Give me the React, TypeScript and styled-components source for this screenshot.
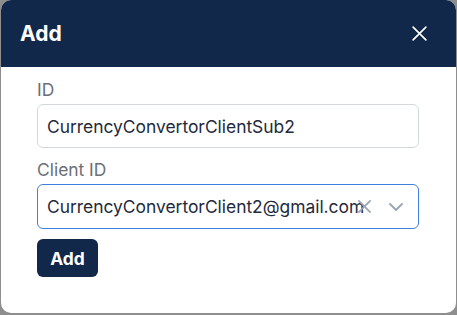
import React from "react";
import styled, { createGlobalStyle } from "styled-components";

const Global = createGlobalStyle`
  html, body { margin: 0; padding: 0; background: #8e8e8e; }
  body { font-family: Inter, "Liberation Sans", sans-serif; }
  * { box-sizing: border-box; }
`;

const Dialog = styled.div`
  margin: 0 1px;
  width: 455px;
  height: 313px;
  background: #ffffff;
  border-radius: 10px;
  overflow: hidden;
  display: flex;
  flex-direction: column;
`;

const Header = styled.div`
  height: 67px;
  background: #12284a;
  display: flex;
  align-items: center;
  justify-content: space-between;
  padding: 0 28px 0 19px;
`;

const Title = styled.h2`
  margin: 0;
  color: #ffffff;
  font-size: 21px;
  font-weight: 700;
  line-height: 1;
`;

const CloseButton = styled.button`
  border: 0;
  background: transparent;
  padding: 0;
  width: 17px;
  height: 17px;
  display: flex;
  align-items: center;
  justify-content: center;
  color: #ffffff;
  cursor: pointer;
`;

const Body = styled.div`
  padding: 11px 37px 0 36px;
  display: flex;
  flex-direction: column;
`;

const Field = styled.div`
  display: flex;
  flex-direction: column;
  gap: 2px;
  margin-bottom: 10px;
`;

const Label = styled.label`
  font-size: 17.4px;
  line-height: 24px;
  color: #6b6f76;
`;

const TextInput = styled.div<{ $focused?: boolean }>`
  position: relative;
  height: ${(p) => (p.$focused ? 45 : 44)}px;
  border: 1px solid ${(p) => (p.$focused ? "#3f7fe0" : "#d3d8df")};
  border-radius: 6px;
  display: flex;
  align-items: center;
  padding: 0 10px 0 9px;
  font-size: 17.4px;
  color: #1f2a3c;
  white-space: nowrap;
`;

const Value = styled.span<{ $clipRight?: number }>`
  display: block;
  overflow: hidden;
  width: ${(p) => (p.$clipRight ? `calc(100% - ${p.$clipRight}px)` : "100%")};
`;

const Indicators = styled.div`
  position: absolute;
  right: 14px;
  top: 0;
  bottom: 0;
  display: flex;
  align-items: center;
  gap: 16px;
  color: #9aa4b3;
`;

const PrimaryButton = styled.button`
  align-self: flex-start;
  border: 0;
  background: #12284a;
  color: #ffffff;
  font-family: inherit;
  font-size: 17.4px;
  font-weight: 700;
  height: 38px;
  width: 61px;
  border-radius: 6px;
  padding: 0;
`;

const XIcon = ({ size, stroke = 2 }: { size: number; stroke?: number }) => (
  <svg width={size} height={size} viewBox="0 0 16 16" fill="none" stroke="currentColor" strokeWidth={stroke} strokeLinecap="round">
    <path d="M2 2 L14 14 M14 2 L2 14" />
  </svg>
);

const Chevron = () => (
  <svg width="16" height="16" viewBox="0 0 16 16" fill="none" stroke="currentColor" strokeWidth="1.8" strokeLinecap="round" strokeLinejoin="round">
    <path d="M2 5 L8 11 L14 5" />
  </svg>
);

export default function App() {
  return (
    <>
      <Global />
      <Dialog>
        <Header>
          <Title>Add</Title>
          <CloseButton aria-label="Close">
            <XIcon size={17} stroke={1.6} />
          </CloseButton>
        </Header>
        <Body>
          <Field>
            <Label>ID</Label>
            <TextInput>
              <Value>CurrencyConvertorClientSub2</Value>
            </TextInput>
          </Field>
          <Field>
            <Label>Client ID</Label>
            <TextInput $focused>
              <Value $clipRight={43}>CurrencyConvertorClient2@gmail.com</Value>
              <Indicators>
                <XIcon size={15} stroke={1.8} />
                <Chevron />
              </Indicators>
            </TextInput>
          </Field>
          <PrimaryButton>Add</PrimaryButton>
        </Body>
      </Dialog>
    </>
  );
}
